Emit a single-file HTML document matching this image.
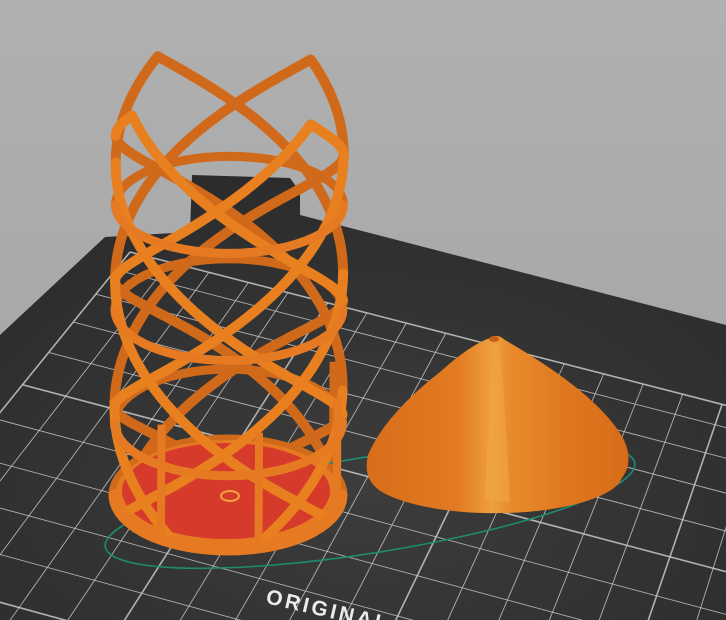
<!DOCTYPE html>
<html><head><meta charset="utf-8"><style>
html,body{margin:0;padding:0;width:726px;height:620px;overflow:hidden;background:#a9a9a9}
svg{display:block}
</style></head><body>
<svg id="s" width="726" height="620" viewBox="0 0 726 620" xmlns="http://www.w3.org/2000/svg">
<defs>
<linearGradient id="bg" x1="0" y1="0" x2="0" y2="1"><stop offset="0" stop-color="#b0b0b0"/><stop offset="1" stop-color="#a2a2a2"/></linearGradient>
<radialGradient id="bed" cx="0.5" cy="0.7" r="0.7"><stop offset="0" stop-color="#3c3c3c"/><stop offset="1" stop-color="#2c2c2c"/></radialGradient>
<linearGradient id="cone" x1="0" y1="0" x2="1" y2="0">
<stop offset="0" stop-color="#d96d1a"/><stop offset="0.35" stop-color="#e27b22"/><stop offset="0.48" stop-color="#eea040"/><stop offset="0.55" stop-color="#e88a2c"/><stop offset="0.75" stop-color="#e07820"/><stop offset="1" stop-color="#d76c18"/></linearGradient>
</defs>
<rect width="726" height="620" fill="url(#bg)"/>
<polygon points="0,335 105,237 190,232 192,175 290,178 300,192 300,215 726,325 726,620 0,620" fill="url(#bed)"/>
<g id="grid" stroke="#c8c8c8" fill="none"></g>
<g id="back"></g>
<ellipse cx="370" cy="505" rx="268" ry="48" transform="rotate(-9 370 505)" fill="none" stroke="#1e8c70" stroke-width="1.6"/>
<ellipse cx="228" cy="495" rx="113" ry="55" fill="#e57a22"/>
<ellipse cx="226" cy="491" rx="104" ry="48" fill="#d63a2a"/>
<ellipse cx="230" cy="496" rx="9" ry="5" fill="none" stroke="#f0a040" stroke-width="2"/>
<g id="front"></g>
<path d="M490,338 Q470,345 440,372 Q385,415 368,455 Q362,480 382,492 A128 40 0 0 0 622,478 Q634,462 624,440 Q600,395 505,340 Q497,333 490,338 Z" fill="url(#cone)"/>
<path d="M494,345 Q488,420 485,500 L510,502 Q506,420 500,345 Z" fill="#f2a74a" opacity="0.5"/>
<ellipse cx="494" cy="339" rx="5" ry="3" fill="#c45f15"/>
<text x="265" y="603" transform="rotate(13 265 603)" fill="#ececec" font-family="Liberation Sans, sans-serif" font-weight="bold" font-size="21" letter-spacing="3">ORIGINAL</text>
</svg>
<script>
var NS="http://www.w3.org/2000/svg";
function el(p,t,a){var e=document.createElementNS(NS,t);for(var k in a)e.setAttribute(k,a[k]);p.appendChild(e);return e;}
var g=document.getElementById('grid');
var BL=[130,252],BR=[880,445],FL=[-330,820],FR=[720,1120];
function P(u,v){var top=[BL[0]+(BR[0]-BL[0])*u,BL[1]+(BR[1]-BL[1])*u];var bot=[FL[0]+(FR[0]-FL[0])*u,FL[1]+(FR[1]-FL[1])*u];
 var vv=Math.pow(v,1.25);return [top[0]+(bot[0]-top[0])*vv,top[1]+(bot[1]-top[1])*vv];}
var N=19,M=16;
for(var i=0;i<=N;i++){var a=P(i/N,0),b=P(i/N,1);el(g,'line',{x1:a[0],y1:a[1],x2:b[0],y2:b[1],'stroke-width':i%5==0?1.6:0.9,opacity:0.85});}
for(var j=0;j<=M;j++){var a=P(0,j/M),b=P(1,j/M);el(g,'line',{x1:a[0],y1:a[1],x2:b[0],y2:b[1],'stroke-width':j%5==0?1.6:0.9,opacity:0.85});}
var back=document.getElementById('back'),front=document.getElementById('front');
function pt(h,t){var cx=230-2*h,cy=92+403*h,R=114,ry=46+9*h;return [cx+R*Math.cos(t),cy+ry*Math.sin(t)];}
function strand(t0,dir,h0,h1,w){
 var pts=[];var n=80;for(var k=0;k<=n;k++){var h=h0+(h1-h0)*k/n;var t=t0+dir*2*Math.PI*h*0.8;pts.push(pt(h,t));}
 var segF=[],segB=[];
 for(var k=0;k<n;k++){var h=h0+(h1-h0)*(k+.5)/n;var t=t0+dir*2*Math.PI*h*0.8;var s=Math.sin(t);
  var d="M"+pts[k][0].toFixed(1)+","+pts[k][1].toFixed(1)+"L"+pts[k+1][0].toFixed(1)+","+pts[k+1][1].toFixed(1);
  if(s>0)segF.push(d);else segB.push(d);}
 if(segB.length)el(back,'path',{d:segB.join(''),stroke:'#d06a1a',fill:'none','stroke-width':w,'stroke-linecap':'round'});
 if(segF.length)el(front,'path',{d:segF.join(''),stroke:'#e8801f',fill:'none','stroke-width':w,'stroke-linecap':'round'});
}
var c=[Math.PI*0.75+0.25,Math.PI*1.25+0.1,Math.PI*1.75,Math.PI*0.25];
for(var i=0;i<4;i++){strand(c[i],1,0,1,10);strand(c[i],-1,0,1,10);}
function ring(h,w){var d1=[],d2=[];var n=60;for(var k=0;k<n;k++){var t=2*Math.PI*k/n,t2=2*Math.PI*(k+1)/n;var a=pt(h,t),b=pt(h,t2);
 var d="M"+a[0].toFixed(1)+","+a[1].toFixed(1)+"L"+b[0].toFixed(1)+","+b[1].toFixed(1);if(Math.sin(t+Math.PI/n)>0)d1.push(d);else d2.push(d);}
 el(back,'path',{d:d2.join(''),stroke:'#d06a1a',fill:'none','stroke-width':w,'stroke-linecap':'round'});
 el(front,'path',{d:d1.join(''),stroke:'#e57a22',fill:'none','stroke-width':w,'stroke-linecap':'round'});}
ring(0.28,9);ring(0.54,9);ring(0.82,9);ring(1.0,11);
[[0.3,1],[1.3,1],[2.2,1],[-0.4,1]].forEach(function(q){var a=pt(0.72,q[0]),b=pt(1,q[0]);var f=Math.sin(q[0])>0;
 el(f?front:back,'line',{x1:a[0],y1:a[1],x2:b[0],y2:b[1],stroke:f?'#e57a22':'#d06a1a','stroke-width':8});});
</script>
</body></html>
